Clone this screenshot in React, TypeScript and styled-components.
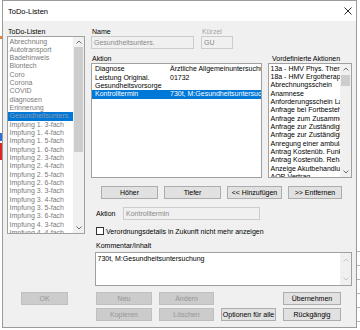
import styled, { createGlobalStyle } from "styled-components";

const GlobalStyle = createGlobalStyle`
  *, *::before, *::after { box-sizing: border-box; }
  html, body { margin: 0; padding: 0; background: #fff; }
  body {
    font-family: "Liberation Sans", Arial, sans-serif;
    font-size: 7px;
    color: #000;
  }
`;

const Page = styled.div`
  display: flex;
  width: 360px;
  height: 330px;
  overflow: hidden;
`;

const EdgeLeft = styled.div`
  width: 2px;
  background: linear-gradient(
    to bottom,
    #fff 0 36px, #e8833a 36px 39px, #fff 39px 133px,
    #2f6fd6 133px 141px, #fff 141px 143px, #e02424 143px 160px, #fff 160px
  );
`;

const EdgeRight = styled.div`
  flex: 1;
  background:
    linear-gradient(#fff 0 244px, transparent 244px),
    repeating-linear-gradient(to bottom, #fff 0 13px, #b4b4b4 13px 14px);
`;

const Window = styled.div`
  width: 355px;
  height: 328px;
  border: 1px solid #9b9b9b;
  background: #f0f0f0;
  display: flex;
  flex-direction: column;
`;

const TitleBar = styled.div`
  height: 20px;
  background: #fff;
  display: flex;
  align-items: center;
  justify-content: space-between;
  padding: 0 4px 0 5px;
  font-size: 7.5px;
`;

const CloseIcon = () => (
  <svg width="8" height="8" viewBox="0 0 8 8">
    <path d="M0.5 0.5 L7.5 7.5 M7.5 0.5 L0.5 7.5" stroke="#111" strokeWidth="0.9" />
  </svg>
);

const Body = styled.div`
  display: flex;
  flex-direction: column;
  padding: 0 2px 0 4px;
`;

const Main = styled.div`
  display: flex;
  gap: 6px;
`;

const LeftCol = styled.div`
  width: 78px;
  display: flex;
  flex-direction: column;
`;

const RightCol = styled.div`
  width: 262px;
  display: flex;
  flex-direction: column;
`;

const Label = styled.div<{ $muted?: boolean; $indent?: number }>`
  height: 9px;
  line-height: 9px;
  white-space: nowrap;
  padding-left: ${p => p.$indent ?? 1}px;
  color: ${p => (p.$muted ? "#a3a3a3" : "#000")};
`;

const TopLabel = styled(Label)`
  margin-top: 6px;
`;

const ListBox = styled.div<{ $height: number }>`
  height: ${p => p.$height}px;
  border: 1px solid #a0a0a0;
  background: #fff;
  display: flex;
  overflow: hidden;
`;

const Items = styled.div<{ $pad?: number }>`
  flex: 1;
  min-width: 0;
  padding-top: ${p => p.$pad ?? 0}px;
`;

const Item = styled.div<{ $selected?: boolean; $grey?: boolean }>`
  height: 8.33px;
  line-height: 8.33px;
  padding-left: 1.5px;
  white-space: nowrap;
  overflow: hidden;
  background: ${p => (p.$selected ? "#0078d7" : "transparent")};
  color: ${p => (p.$grey ? (p.$selected ? "#8e9bb0" : "#7a7a7a") : "#000")};
`;

const TableRow = styled.div<{ $selected?: boolean }>`
  display: grid;
  grid-template-columns: 75px 1fr;
  height: 8.4px;
  line-height: 8.4px;
  padding-left: 3px;
  white-space: nowrap;
  overflow: hidden;
  background: ${p => (p.$selected ? "#0078d7" : "transparent")};
  color: ${p => (p.$selected ? "#fff" : "#000")};
`;

const Scroll = styled.div<{ $width: number }>`
  width: ${p => p.$width}px;
  background: #f0f0f0;
  display: flex;
  flex-direction: column;
`;

const Arrow = styled.div<{ $size: number }>`
  height: ${p => p.$size}px;
  display: flex;
  align-items: center;
  justify-content: center;
`;

const Track = styled.div`
  flex: 1;
`;

const Thumb = styled.div<{ $top: number; $height: number }>`
  margin: ${p => p.$top}px 1px 0;
  height: ${p => p.$height}px;
  background: #cdcdcd;
`;

const Chevron = ({ up, color }: { up?: boolean; color: string }) => (
  <svg width="6" height="4" viewBox="0 0 6 4">
    <polyline
      points={up ? "0.5,3.5 3,1 5.5,3.5" : "0.5,0.5 3,3 5.5,0.5"}
      fill="none"
      stroke={color}
      strokeWidth="0.9"
    />
  </svg>
);

const ScrollBar = ({
  width,
  arrow,
  thumbTop,
  thumbHeight,
  disabled,
}: {
  width: number;
  arrow: number;
  thumbTop?: number;
  thumbHeight?: number;
  disabled?: boolean;
}) => {
  const c = disabled ? "#c2c2c2" : "#606060";
  return (
    <Scroll $width={width}>
      <Arrow $size={arrow}>
        <Chevron up color={c} />
      </Arrow>
      <Track>{thumbHeight ? <Thumb $top={thumbTop ?? 0} $height={thumbHeight} /> : null}</Track>
      <Arrow $size={arrow}>
        <Chevron color={c} />
      </Arrow>
    </Scroll>
  );
};

const TopRow = styled.div`
  display: flex;
  gap: 7px;
`;

const Field = styled.div<{ $width: number }>`
  width: ${p => p.$width}px;
  display: flex;
  flex-direction: column;
`;

const Input = styled.div<{ $width?: number }>`
  height: 13px;
  width: ${p => (p.$width ? `${p.$width}px` : "auto")};
  border: 1px solid #cccccc;
  background: #f0f0f0;
  color: #8a8a8a;
  line-height: 11px;
  padding-left: 2px;
  white-space: nowrap;
  overflow: hidden;
`;

const ListsRow = styled.div`
  display: flex;
  gap: 6px;
  margin-top: 5px;
`;

const ButtonRow = styled.div`
  display: flex;
  gap: 6px;
  margin-top: 8px;
  padding-left: 10px;
`;

const Button = styled.div<{ $width?: number; $disabled?: boolean; $col?: number }>`
  width: ${p => (p.$width ? `${p.$width}px` : "auto")};
  height: 13px;
  grid-column: ${p => p.$col ?? "auto"};
  border: 1px solid ${p => (p.$disabled ? "#bfbfbf" : "#adadad")};
  background: ${p => (p.$disabled ? "#cccccc" : "#e1e1e1")};
  color: ${p => (p.$disabled ? "#959595" : "#000")};
  display: flex;
  align-items: center;
  justify-content: center;
  white-space: nowrap;
`;

const AktionRow = styled.div`
  display: flex;
  align-items: center;
  margin-top: 8px;
  padding-left: 5px;
`;

const InlineLabel = styled.div`
  width: 27px;
`;

const CheckRow = styled.div`
  display: flex;
  align-items: center;
  gap: 2px;
  height: 8px;
  margin-top: 7px;
  padding-left: 5px;
  white-space: nowrap;
`;

const Box = styled.div`
  width: 8px;
  height: 8px;
  border: 1px solid #333;
  background: #fff;
`;

const CommentLabel = styled(Label)`
  margin-top: 6px;
  padding-left: 5px;
`;

const TextArea = styled.div`
  margin: 2px 0 0 4px;
  width: 257px;
  height: 34px;
  border: 1px solid #a0a0a0;
  background: #fff;
  display: flex;
`;

const TextContent = styled.div`
  flex: 1;
  padding: 2px 0 0 1.5px;
  line-height: 8.4px;
  white-space: nowrap;
`;

const Footer = styled.div`
  display: flex;
  gap: 6px;
  margin-top: 6px;
`;

const FooterLeft = styled.div`
  width: 78px;
  padding-left: 14px;
`;

const ButtonGrid = styled.div`
  display: grid;
  grid-template-columns: 56px 55px 55px 58px;
  grid-auto-rows: 13px;
  column-gap: 7px;
  row-gap: 3px;
  padding-left: 5px;
`;

const todoLists = [
  "Abrechnung",
  "Autotransport",
  "Badehinweis",
  "Biontech",
  "Coro",
  "Corona",
  "COVID",
  "diagnosen",
  "Erinnerung",
  "Gesundheitsunters.",
  "Impfung 1. 3-fach",
  "Impfung 1. 4-fach",
  "Impfung 1. 5-fach",
  "Impfung 1. 6-fach",
  "Impfung 2. 3-fach",
  "Impfung 2. 4-fach",
  "Impfung 2. 5-fach",
  "Impfung 2. 6-fach",
  "Impfung 3. 3-fach",
  "Impfung 3. 4-fach",
  "Impfung 3. 5-fach",
  "Impfung 3. 6-fach",
  "Impfung 4. 3-fach",
  "Impfung 4. 4-fach",
];

const actions = [
  ["Diagnose", "Ärztliche Allgemeinuntersuchung"],
  ["Leistung Original.", "01732"],
  ["Gesundheitsvorsorge", ""],
  ["Kontrolltermin", "730t, M:Gesundheitsuntersuchung"],
];

const predefined = [
  "13a - HMV Phys. Therapie",
  "18a - HMV Ergotherapie",
  "Abrechnungsschein",
  "Anamnese",
  "Anforderungsschein Labor",
  "Anfrage bei Fortbestehen",
  "Anfrage zum Zusammenhang",
  "Anfrage zur Zuständigkeit",
  "Anfrage zur Zuständigkeit",
  "Anregung einer ambulanten",
  "Antrag Kostenüb. Funktion",
  "Antrag Kostenüb. Reha",
  "Anzeige Akutbehandlung",
  "AOP-Vertrag",
];

export default function App() {
  return (
    <>
      <GlobalStyle />
      <Page>
        <EdgeLeft />
        <Window>
          <TitleBar>
            <span>ToDo-Listen</span>
            <CloseIcon />
          </TitleBar>
          <Body>
            <Main>
              <LeftCol>
                <TopLabel>ToDo-Listen</TopLabel>
                <ListBox $height={198}>
                  <Items $pad={0.5}>
                    {todoLists.map(name => (
                      <Item key={name} $grey $selected={name === "Gesundheitsunters."}>
                        {name}
                      </Item>
                    ))}
                  </Items>
                  <ScrollBar width={11} arrow={10} thumbTop={0} thumbHeight={105} />
                </ListBox>
              </LeftCol>

              <RightCol>
                <TopRow>
                  <Field $width={103}>
                    <TopLabel>Name</TopLabel>
                    <Input>Gesundheitsunters.</Input>
                  </Field>
                  <Field $width={32}>
                    <TopLabel $muted>Kürzel</TopLabel>
                    <Input>GU</Input>
                  </Field>
                </TopRow>

                <ListsRow>
                  <Field $width={171}>
                    <Label>Aktion</Label>
                    <ListBox $height={115}>
                      <Items $pad={1.3}>
                        {actions.map(([a, b], i) => (
                          <TableRow key={a} $selected={i === 3}>
                            <span>{a}</span>
                            <span>{b}</span>
                          </TableRow>
                        ))}
                      </Items>
                    </ListBox>
                  </Field>
                  <Field $width={84}>
                    <Label $indent={4}>Vordefinierte Aktionen</Label>
                    <ListBox $height={115}>
                      <Items $pad={0.8}>
                        {predefined.map((p, i) => (
                          <Item key={i}>{p}</Item>
                        ))}
                      </Items>
                      <ScrollBar width={11} arrow={10} thumbTop={1} thumbHeight={11} />
                    </ListBox>
                  </Field>
                </ListsRow>

                <ButtonRow>
                  <Button $width={57}>Höher</Button>
                  <Button $width={57}>Tiefer</Button>
                  <Button $width={55}>&lt;&lt; Hinzufügen</Button>
                  <Button $width={54}>&gt;&gt; Entfernen</Button>
                </ButtonRow>

                <AktionRow>
                  <InlineLabel>Aktion</InlineLabel>
                  <Input $width={137}>Kontrolltermin</Input>
                </AktionRow>

                <CheckRow>
                  <Box />
                  <span>Verordnungsdetails in Zukunft nicht mehr anzeigen</span>
                </CheckRow>

                <CommentLabel>Kommentar/Inhalt</CommentLabel>
                <TextArea>
                  <TextContent>730t, M:Gesundheitsuntersuchung</TextContent>
                  <ScrollBar width={11} arrow={13} disabled />
                </TextArea>
              </RightCol>
            </Main>

            <Footer>
              <FooterLeft>
                <Button $width={47} $disabled>
                  OK
                </Button>
              </FooterLeft>
              <ButtonGrid>
                <Button $disabled $col={1}>Neu</Button>
                <Button $disabled $col={2}>Ändern</Button>
                <Button $col={4}>Übernehmen</Button>
                <Button $disabled $col={1}>Kopieren</Button>
                <Button $disabled $col={2}>Löschen</Button>
                <Button $col={3}>Optionen für alle</Button>
                <Button $col={4}>Rückgängig</Button>
              </ButtonGrid>
            </Footer>
          </Body>
        </Window>
        <EdgeRight />
      </Page>
    </>
  );
}
